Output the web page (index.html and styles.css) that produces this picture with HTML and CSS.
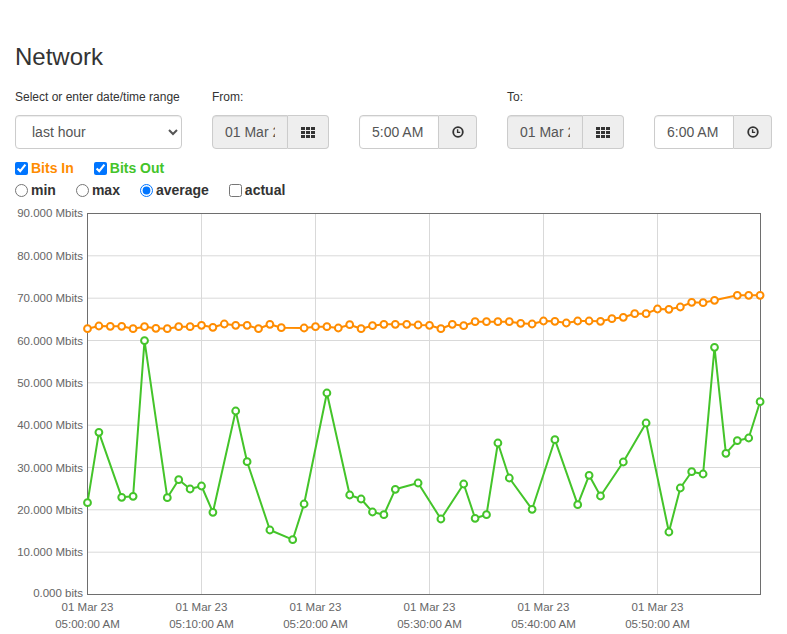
FILE: index.html
```html
<!DOCTYPE html>
<html>
<head>
<meta charset="utf-8">
<title>Network</title>
<link rel="stylesheet" href="styles.css">
</head>
<body>
<div class="page">
  <h1 class="title">Network</h1>
  <div class="range-row">
    <div class="field field-range">
      <label class="field-label">Select or enter date/time range</label>
      <select class="control select">
        <option>last hour</option>
      </select>
    </div>
    <div class="field field-date">
      <label class="field-label">From:</label>
      <div class="group">
        <input class="control group-input date-input" value="01 Mar 2023" readonly>
        <span class="group-btn date-btn">
          <svg width="14" height="11" viewBox="0 0 14 11"><g fill="#333"><rect x="0" y="0" width="4" height="3"/><rect x="5" y="0" width="4" height="3"/><rect x="10" y="0" width="4" height="3"/><rect x="0" y="4" width="4" height="3"/><rect x="5" y="4" width="4" height="3"/><rect x="10" y="4" width="4" height="3"/><rect x="0" y="8" width="4" height="3"/><rect x="5" y="8" width="4" height="3"/><rect x="10" y="8" width="4" height="3"/></g></svg>
        </span>
      </div>
    </div>
    <div class="field field-time">
      <label class="field-label">&nbsp;</label>
      <div class="group">
        <input class="control group-input time-input" value="5:00 AM">
        <span class="group-btn time-btn">
          <svg width="12" height="12" viewBox="0 0 12 12"><circle cx="6" cy="6" r="4.8" fill="none" stroke="#333" stroke-width="1.8"/><path d="M5.6 3.2V6.4H8.2" fill="none" stroke="#333" stroke-width="1.4"/></svg>
        </span>
      </div>
    </div>
    <div class="field field-date">
      <label class="field-label">To:</label>
      <div class="group">
        <input class="control group-input date-input" value="01 Mar 2023" readonly>
        <span class="group-btn date-btn">
          <svg width="14" height="11" viewBox="0 0 14 11"><g fill="#333"><rect x="0" y="0" width="4" height="3"/><rect x="5" y="0" width="4" height="3"/><rect x="10" y="0" width="4" height="3"/><rect x="0" y="4" width="4" height="3"/><rect x="5" y="4" width="4" height="3"/><rect x="10" y="4" width="4" height="3"/><rect x="0" y="8" width="4" height="3"/><rect x="5" y="8" width="4" height="3"/><rect x="10" y="8" width="4" height="3"/></g></svg>
        </span>
      </div>
    </div>
    <div class="field field-time">
      <label class="field-label">&nbsp;</label>
      <div class="group">
        <input class="control group-input time-input" value="6:00 AM">
        <span class="group-btn time-btn">
          <svg width="12" height="12" viewBox="0 0 12 12"><circle cx="6" cy="6" r="4.8" fill="none" stroke="#333" stroke-width="1.8"/><path d="M5.6 3.2V6.4H8.2" fill="none" stroke="#333" stroke-width="1.4"/></svg>
        </span>
      </div>
    </div>
  </div>

  <div class="opt-row series-row">
    <label class="opt bits-in"><input type="checkbox" checked>Bits In</label>
    <label class="opt bits-out"><input type="checkbox" checked>Bits Out</label>
  </div>
  <div class="opt-row mode-row">
    <label class="opt"><input type="radio" name="m">min</label>
    <label class="opt"><input type="radio" name="m">max</label>
    <label class="opt"><input type="radio" name="m" checked>average</label>
    <label class="opt"><input type="checkbox">actual</label>
  </div>
</div>

<svg class="chart" width="787" height="432" viewBox="0 200 787 432">
  <g class="grid">
    <line x1="87.5" y1="255.8" x2="760.5" y2="255.8"/>
    <line x1="87.5" y1="298.2" x2="760.5" y2="298.2"/>
    <line x1="87.5" y1="340.5" x2="760.5" y2="340.5"/>
    <line x1="87.5" y1="382.8" x2="760.5" y2="382.8"/>
    <line x1="87.5" y1="425.2" x2="760.5" y2="425.2"/>
    <line x1="87.5" y1="467.5" x2="760.5" y2="467.5"/>
    <line x1="87.5" y1="509.8" x2="760.5" y2="509.8"/>
    <line x1="87.5" y1="552.2" x2="760.5" y2="552.2"/>
    <line x1="201.5" y1="213.5" x2="201.5" y2="594.5"/>
    <line x1="315.5" y1="213.5" x2="315.5" y2="594.5"/>
    <line x1="429.5" y1="213.5" x2="429.5" y2="594.5"/>
    <line x1="543.5" y1="213.5" x2="543.5" y2="594.5"/>
    <line x1="657.5" y1="213.5" x2="657.5" y2="594.5"/>
  </g>
  <rect class="frame" x="87.5" y="213.5" width="673" height="381"/>
  <g class="ylabels">
    <text x="83" y="217">90.000 Mbits</text>
    <text x="83" y="259.8">80.000 Mbits</text>
    <text x="83" y="302.2">70.000 Mbits</text>
    <text x="83" y="344.5">60.000 Mbits</text>
    <text x="83" y="386.8">50.000 Mbits</text>
    <text x="83" y="429.2">40.000 Mbits</text>
    <text x="83" y="471.5">30.000 Mbits</text>
    <text x="83" y="513.8">20.000 Mbits</text>
    <text x="83" y="556.2">10.000 Mbits</text>
    <text x="83" y="597">0.000 bits</text>
  </g>
  <g class="xlabels">
    <text x="87.5" y="611">01 Mar 23</text><text x="87.5" y="628">05:00:00 AM</text>
    <text x="201.5" y="611">01 Mar 23</text><text x="201.5" y="628">05:10:00 AM</text>
    <text x="315.5" y="611">01 Mar 23</text><text x="315.5" y="628">05:20:00 AM</text>
    <text x="429.5" y="611">01 Mar 23</text><text x="429.5" y="628">05:30:00 AM</text>
    <text x="543.5" y="611">01 Mar 23</text><text x="543.5" y="628">05:40:00 AM</text>
    <text x="657.5" y="611">01 Mar 23</text><text x="657.5" y="628">05:50:00 AM</text>
  </g>

  <g class="series series-out">
    <polyline points="87.5,502.7 98.9,432.3 121.7,497.3 133.1,496.3 144.5,340.7 167.3,497.7 178.7,479.7 190.1,489 201.5,486 212.9,512.3 235.7,411 247.1,461.7 269.9,530 292.7,539.7 304.1,504 326.9,393 349.7,495 361.1,499 372.5,512 383.9,514.7 395.3,489.3 418.1,483 440.9,519 463.7,484 475.1,518.3 486.5,514.7 497.9,443 509.3,478 532.1,509.3 554.9,439.7 577.7,504.7 589.1,475.3 600.5,496 623.3,462 646.1,423 668.9,532 680.3,488 691.7,471.7 703.1,474 714.5,347.3 725.9,453.3 737.3,440.7 748.7,438 760.1,401.7"/>
    <circle cx="87.5" cy="502.7" r="3.4"/><circle cx="98.9" cy="432.3" r="3.4"/><circle cx="121.7" cy="497.3" r="3.4"/><circle cx="133.1" cy="496.3" r="3.4"/><circle cx="144.5" cy="340.7" r="3.4"/><circle cx="167.3" cy="497.7" r="3.4"/><circle cx="178.7" cy="479.7" r="3.4"/><circle cx="190.1" cy="489" r="3.4"/><circle cx="201.5" cy="486" r="3.4"/><circle cx="212.9" cy="512.3" r="3.4"/><circle cx="235.7" cy="411" r="3.4"/><circle cx="247.1" cy="461.7" r="3.4"/><circle cx="269.9" cy="530" r="3.4"/><circle cx="292.7" cy="539.7" r="3.4"/><circle cx="304.1" cy="504" r="3.4"/><circle cx="326.9" cy="393" r="3.4"/><circle cx="349.7" cy="495" r="3.4"/><circle cx="361.1" cy="499" r="3.4"/><circle cx="372.5" cy="512" r="3.4"/><circle cx="383.9" cy="514.7" r="3.4"/><circle cx="395.3" cy="489.3" r="3.4"/><circle cx="418.1" cy="483" r="3.4"/><circle cx="440.9" cy="519" r="3.4"/><circle cx="463.7" cy="484" r="3.4"/><circle cx="475.1" cy="518.3" r="3.4"/><circle cx="486.5" cy="514.7" r="3.4"/><circle cx="497.9" cy="443" r="3.4"/><circle cx="509.3" cy="478" r="3.4"/><circle cx="532.1" cy="509.3" r="3.4"/><circle cx="554.9" cy="439.7" r="3.4"/><circle cx="577.7" cy="504.7" r="3.4"/><circle cx="589.1" cy="475.3" r="3.4"/><circle cx="600.5" cy="496" r="3.4"/><circle cx="623.3" cy="462" r="3.4"/><circle cx="646.1" cy="423" r="3.4"/><circle cx="668.9" cy="532" r="3.4"/><circle cx="680.3" cy="488" r="3.4"/><circle cx="691.7" cy="471.7" r="3.4"/><circle cx="703.1" cy="474" r="3.4"/><circle cx="714.5" cy="347.3" r="3.4"/><circle cx="725.9" cy="453.3" r="3.4"/><circle cx="737.3" cy="440.7" r="3.4"/><circle cx="748.7" cy="438" r="3.4"/><circle cx="760.1" cy="401.7" r="3.4"/>
  </g>

  <g class="series series-in">
    <polyline points="87.5,328.7 98.9,326 110.3,326.3 121.7,326.3 133.1,328.7 144.5,326.7 155.9,328.3 167.3,328.7 178.7,326.7 190.1,326.7 201.5,325.3 212.9,327.3 224.3,324 235.7,325.3 247.1,325.3 258.5,328.7 269.9,324.3 281.3,327.7 304.1,328 315.5,326.7 326.9,326.7 338.3,328 349.7,324.7 361.1,328.7 372.5,325.7 383.9,324.3 395.3,324.3 406.7,324.3 418.1,325 429.5,325.3 440.9,328.7 452.3,324.3 463.7,325.7 475.1,321.7 486.5,321.7 497.9,321.7 509.3,321.7 520.7,323.3 532.1,324 543.5,321 554.9,321.3 566.3,323 577.7,321 589.1,321 600.5,321.3 611.9,318.7 623.3,317.3 634.7,313.7 646.1,313.7 657.5,309 668.9,309.3 680.3,307 691.7,302.3 703.1,302.7 714.5,300.3 737.3,295.3 748.7,295.3 760.1,295.3"/>
    <circle cx="87.5" cy="328.7" r="3.4"/><circle cx="98.9" cy="326" r="3.4"/><circle cx="110.3" cy="326.3" r="3.4"/><circle cx="121.7" cy="326.3" r="3.4"/><circle cx="133.1" cy="328.7" r="3.4"/><circle cx="144.5" cy="326.7" r="3.4"/><circle cx="155.9" cy="328.3" r="3.4"/><circle cx="167.3" cy="328.7" r="3.4"/><circle cx="178.7" cy="326.7" r="3.4"/><circle cx="190.1" cy="326.7" r="3.4"/><circle cx="201.5" cy="325.3" r="3.4"/><circle cx="212.9" cy="327.3" r="3.4"/><circle cx="224.3" cy="324" r="3.4"/><circle cx="235.7" cy="325.3" r="3.4"/><circle cx="247.1" cy="325.3" r="3.4"/><circle cx="258.5" cy="328.7" r="3.4"/><circle cx="269.9" cy="324.3" r="3.4"/><circle cx="281.3" cy="327.7" r="3.4"/><circle cx="304.1" cy="328" r="3.4"/><circle cx="315.5" cy="326.7" r="3.4"/><circle cx="326.9" cy="326.7" r="3.4"/><circle cx="338.3" cy="328" r="3.4"/><circle cx="349.7" cy="324.7" r="3.4"/><circle cx="361.1" cy="328.7" r="3.4"/><circle cx="372.5" cy="325.7" r="3.4"/><circle cx="383.9" cy="324.3" r="3.4"/><circle cx="395.3" cy="324.3" r="3.4"/><circle cx="406.7" cy="324.3" r="3.4"/><circle cx="418.1" cy="325" r="3.4"/><circle cx="429.5" cy="325.3" r="3.4"/><circle cx="440.9" cy="328.7" r="3.4"/><circle cx="452.3" cy="324.3" r="3.4"/><circle cx="463.7" cy="325.7" r="3.4"/><circle cx="475.1" cy="321.7" r="3.4"/><circle cx="486.5" cy="321.7" r="3.4"/><circle cx="497.9" cy="321.7" r="3.4"/><circle cx="509.3" cy="321.7" r="3.4"/><circle cx="520.7" cy="323.3" r="3.4"/><circle cx="532.1" cy="324" r="3.4"/><circle cx="543.5" cy="321" r="3.4"/><circle cx="554.9" cy="321.3" r="3.4"/><circle cx="566.3" cy="323" r="3.4"/><circle cx="577.7" cy="321" r="3.4"/><circle cx="589.1" cy="321" r="3.4"/><circle cx="600.5" cy="321.3" r="3.4"/><circle cx="611.9" cy="318.7" r="3.4"/><circle cx="623.3" cy="317.3" r="3.4"/><circle cx="634.7" cy="313.7" r="3.4"/><circle cx="646.1" cy="313.7" r="3.4"/><circle cx="657.5" cy="309" r="3.4"/><circle cx="668.9" cy="309.3" r="3.4"/><circle cx="680.3" cy="307" r="3.4"/><circle cx="691.7" cy="302.3" r="3.4"/><circle cx="703.1" cy="302.7" r="3.4"/><circle cx="714.5" cy="300.3" r="3.4"/><circle cx="737.3" cy="295.3" r="3.4"/><circle cx="748.7" cy="295.3" r="3.4"/><circle cx="760.1" cy="295.3" r="3.4"/>
  </g>
</svg>
</body>
</html>
```

FILE: styles.css
```css
html, body {
  margin: 0;
  padding: 0;
  overflow: hidden;
  background: #fff;
}
body {
  font-family: "Liberation Sans", Arial, sans-serif;
  color: #333;
  font-size: 14px;
}
.page {
  padding: 0 15px;
}
.title {
  font-size: 24px;
  font-weight: 400;
  line-height: 26px;
  margin: 44px 0 19px;
  color: #333;
}
.range-row {
  display: flex;
  gap: 30px;
}
.field {
  display: flex;
  flex-direction: column;
}
.field-label {
  font-size: 12px;
  line-height: 17px;
  margin-bottom: 9px;
  color: #333;
}
.field-range { width: 167px; }
.field-date { width: 117px; }
.field-time { width: 118px; }
.control {
  box-sizing: border-box;
  height: 34px;
  border: 1px solid #ccc;
  border-radius: 4px;
  font-family: "Liberation Sans", Arial, sans-serif;
  font-size: 14px;
  color: #555;
  background: #fff;
  padding: 6px 12px;
  margin: 0;
  box-shadow: inset 0 1px 1px rgba(0,0,0,.075);
}
.select {
  width: 167px;
}
.group {
  display: flex;
  height: 34px;
}
.group-input {
  min-width: 0;
  border-radius: 4px 0 0 4px;
  outline: none;
}
.date-input {
  width: 76px;
  background: #eee;
}
.time-input {
  width: 80px;
}
.group-btn {
  box-sizing: border-box;
  display: flex;
  align-items: center;
  justify-content: center;
  height: 34px;
  background: #eee;
  border: 1px solid #ccc;
  border-left: none;
  border-radius: 0 4px 4px 0;
}
.date-btn { width: 41px; }
.time-btn { width: 38px; }
.opt-row {
  display: flex;
  gap: 20px;
  line-height: 20px;
  font-size: 14px;
  font-weight: 700;
}
.series-row { margin-top: 9px; }
.mode-row { margin-top: 2px; }
.opt {
  display: flex;
  align-items: center;
  color: #333;
}
.opt input {
  margin: 0 3px 0 0;
  width: 13px;
  height: 13px;
}
.bits-in { color: #ff8c00; }
.bits-out { color: #44c42a; }
.chart {
  display: block;
}
.grid line {
  stroke: #d9d9d9;
  stroke-width: 1;
}
.frame {
  fill: none;
  stroke: #6e6e6e;
  stroke-width: 1;
}
.ylabels text {
  font-family: "Liberation Sans", Arial, sans-serif;
  font-size: 11.5px;
  fill: #666;
  text-anchor: end;
}
.xlabels text {
  font-family: "Liberation Sans", Arial, sans-serif;
  font-size: 11.5px;
  fill: #666;
  text-anchor: middle;
}
.series polyline {
  fill: none;
  stroke-width: 2;
  stroke-linejoin: round;
}
.series circle {
  fill: #fff;
  stroke-width: 2;
}
.series-in polyline, .series-in circle { stroke: #ff8c00; }
.series-out polyline, .series-out circle { stroke: #44c42a; }
```
